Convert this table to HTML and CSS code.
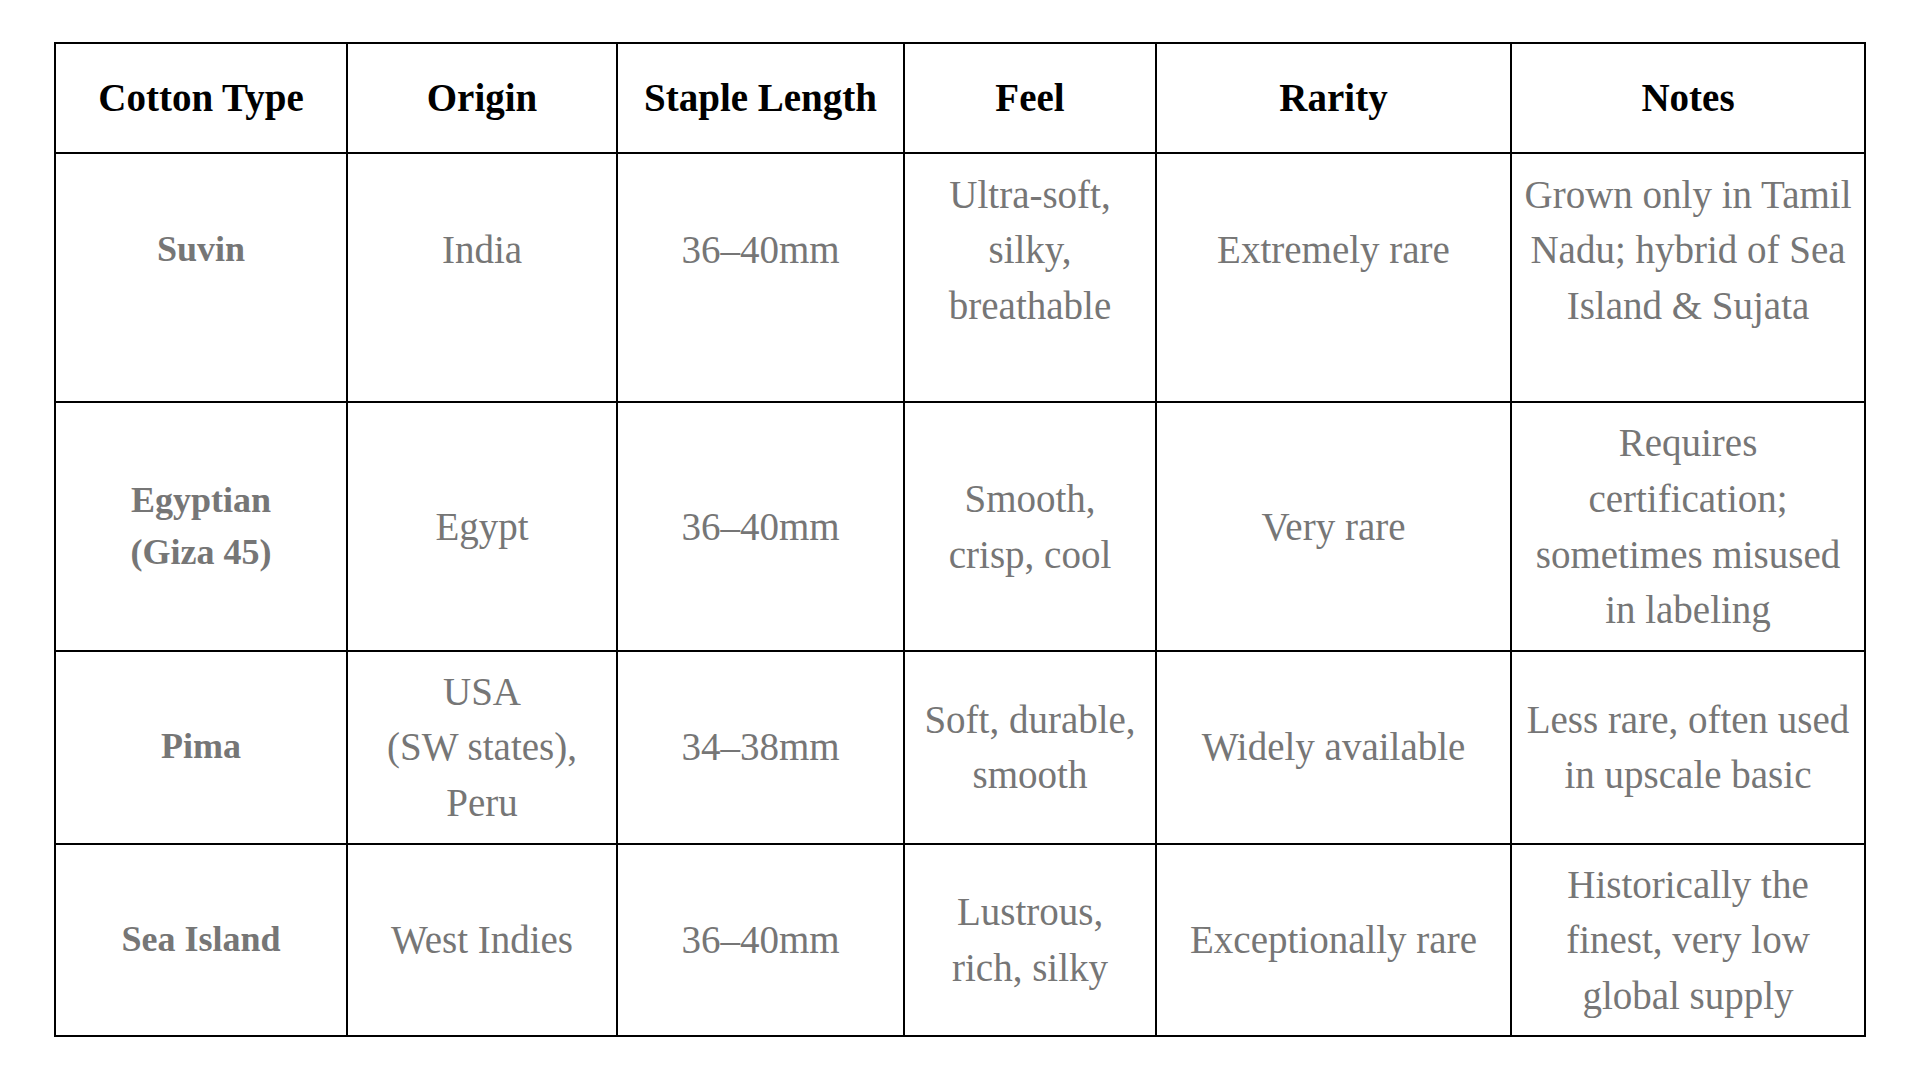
FILE: index.html
```html
<!DOCTYPE html>
<html lang="en">
<head>
<meta charset="utf-8">
<title>Cotton Types</title>
<link rel="stylesheet" href="styles.css">
</head>
<body>
<main class="page">
  <table class="cotton-table">
    <colgroup>
      <col class="c-type">
      <col class="c-origin">
      <col class="c-staple">
      <col class="c-feel">
      <col class="c-rarity">
      <col class="c-notes">
    </colgroup>
    <thead>
      <tr>
        <th>Cotton Type</th>
        <th>Origin</th>
        <th>Staple Length</th>
        <th>Feel</th>
        <th>Rarity</th>
        <th>Notes</th>
      </tr>
    </thead>
    <tbody>
      <tr class="row-first">
        <td class="name">Suvin</td>
        <td>India</td>
        <td>36–40mm</td>
        <td>Ultra-soft,<br>silky,<br>breathable</td>
        <td>Extremely rare</td>
        <td>Grown only in Tamil<br>Nadu; hybrid of Sea<br>Island &amp; Sujata</td>
      </tr>
      <tr>
        <td class="name">Egyptian<br>(Giza 45)</td>
        <td>Egypt</td>
        <td>36–40mm</td>
        <td>Smooth,<br>crisp, cool</td>
        <td>Very rare</td>
        <td>Requires<br>certification;<br>sometimes misused<br>in labeling</td>
      </tr>
      <tr>
        <td class="name">Pima</td>
        <td>USA<br>(SW states),<br>Peru</td>
        <td>34–38mm</td>
        <td>Soft, durable,<br>smooth</td>
        <td>Widely available</td>
        <td>Less rare, often used<br>in upscale basic</td>
      </tr>
      <tr>
        <td class="name">Sea Island</td>
        <td>West Indies</td>
        <td>36–40mm</td>
        <td>Lustrous,<br>rich, silky</td>
        <td>Exceptionally rare</td>
        <td>Historically the<br>finest, very low<br>global supply</td>
      </tr>
    </tbody>
  </table>
</main>
</body>
</html>
```

FILE: styles.css
```css
html, body {
  margin: 0;
  padding: 0;
  background: #ffffff;
}

.page {
  padding: 42px 56px 0 54px;
  font-family: "Liberation Serif", "DejaVu Serif", serif;
}

.cotton-table {
  width: 100%;
  border-collapse: collapse;
  table-layout: fixed;
  border: 2px solid #1a1a1a;
}

.c-type { width: 292px; }
.c-origin { width: 270px; }
.c-staple { width: 287px; }
.c-feel { width: 252px; }
.c-rarity { width: 355px; }
.c-notes { width: 354px; }

.cotton-table th,
.cotton-table td {
  border: 2px solid #000;
  text-align: center;
  vertical-align: middle;
}

.cotton-table th {
  padding: 26px 10px;
  font-size: 39px;
  line-height: 55.6px;
  font-weight: 700;
  color: #000;
}

.cotton-table td {
  padding: 12px 10px;
  font-size: 39px;
  line-height: 55.6px;
  font-weight: 400;
  color: #767676;
}

.cotton-table td.name {
  font-size: 36px;
  line-height: 51.4px;
  font-weight: 700;
  color: #767676;
}

.row-first td {
  padding-top: 13px;
  padding-bottom: 68px;
}
```
